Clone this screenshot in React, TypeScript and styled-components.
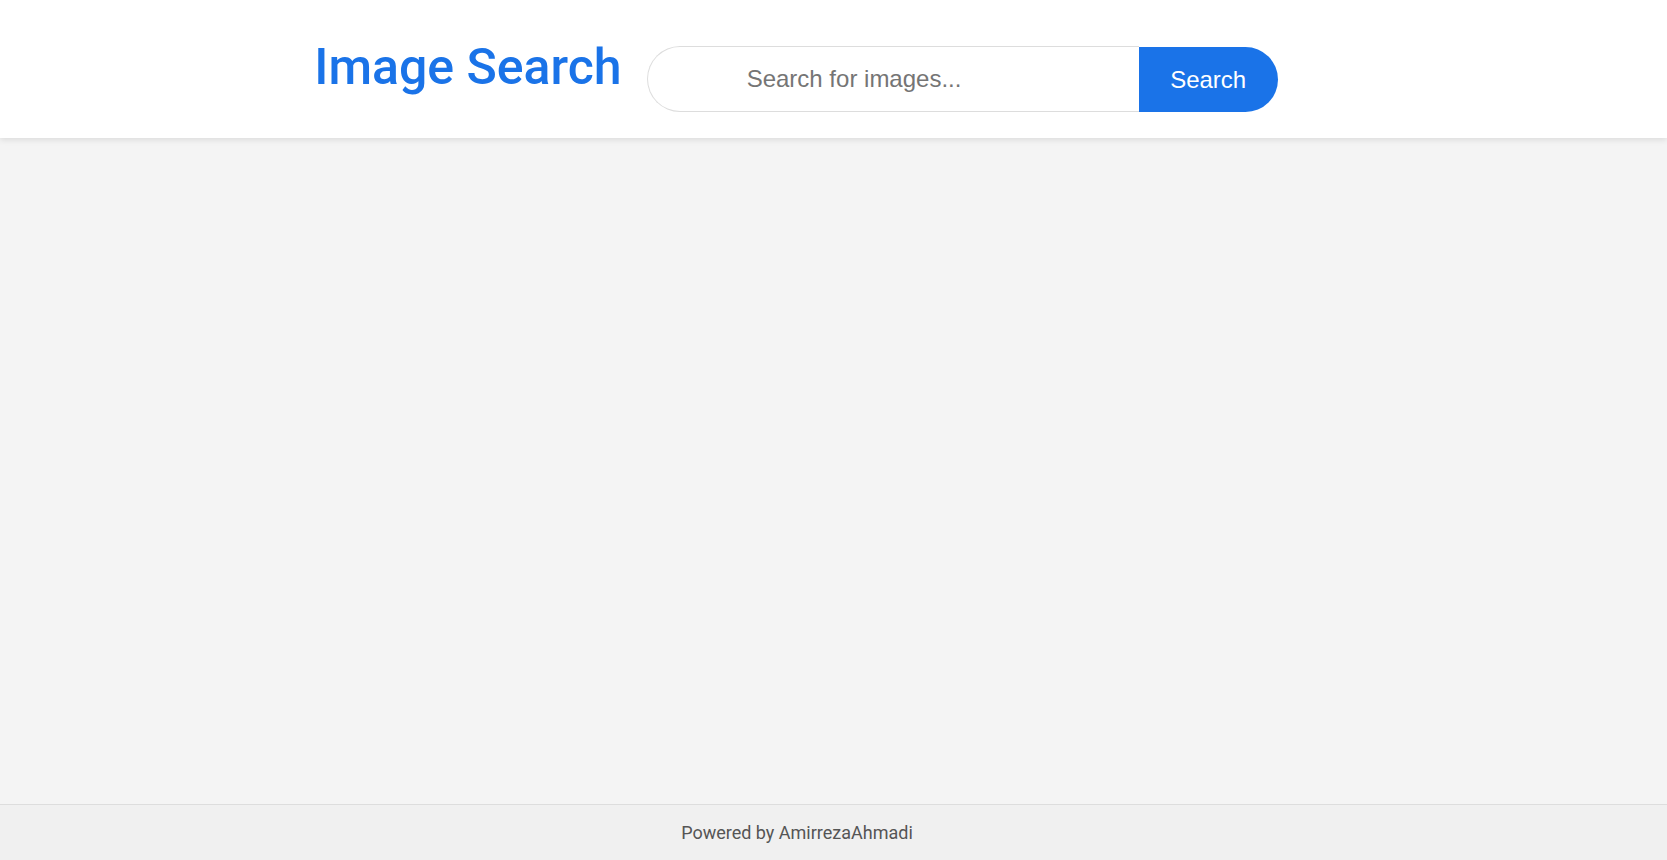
import React, { FC, useState } from "react";
import styled, { createGlobalStyle } from "styled-components";

const GlobalStyle = createGlobalStyle`
  * {
    box-sizing: border-box;
  }
  body {
    margin: 0;
    font-family: Roboto, "Liberation Sans", sans-serif;
    background: #f4f4f4;
  }
`;

const App: FC = () => {
  const [query, setQuery] = useState("");

  return (
    <Page>
      <GlobalStyle />
      <Header>
        <HeaderInner>
          <Title>Image Search</Title>
          <SearchForm onSubmit={(e) => e.preventDefault()}>
            <SearchInput
              type="text"
              placeholder="Search for images..."
              value={query}
              onChange={(e) => setQuery(e.target.value)}
            />
            <SearchButton type="submit">Search</SearchButton>
          </SearchForm>
        </HeaderInner>
      </Header>
      <Main />
      <Footer>
        <FooterText>Powered by AmirrezaAhmadi</FooterText>
      </Footer>
    </Page>
  );
};

const Page = styled.div`
  min-height: 100vh;
  display: flex;
  flex-direction: column;
`;

const Header = styled.header`
  height: 138px;
  background: #fff;
  box-shadow: 0 2px 6px rgba(0, 0, 0, 0.1);
  position: relative;
  z-index: 1;
`;

const HeaderInner = styled.div`
  display: flex;
  justify-content: center;
  align-items: flex-start;
  gap: 25px;
  padding-top: 31px;
  padding-right: 75px;
`;

const Title = styled.h1`
  margin: 6px 0 0;
  font-family: Roboto, sans-serif;
  font-size: 50px;
  font-weight: 500;
  line-height: 60px;
  color: #1a73e8;
`;

const SearchForm = styled.form`
  display: flex;
  margin-top: 15px;
`;

const SearchInput = styled.input`
  width: 492px;
  height: 66px;
  padding: 0 20px 0 99px;
  border: 1px solid #ddd;
  border-right: none;
  border-radius: 33px 0 0 33px;
  font-family: "Liberation Sans", Arial, sans-serif;
  font-size: 24px;
  color: #333;
  outline: none;

  &::placeholder {
    color: #757575;
  }
`;

const SearchButton = styled.button`
  width: 139px;
  height: 65px;
  margin-top: 1px;
  border: none;
  border-radius: 0 33px 33px 0;
  background: #1a73e8;
  color: #fff;
  font-family: "Liberation Sans", Arial, sans-serif;
  font-size: 24px;
  cursor: pointer;
`;

const Main = styled.main`
  flex: 1;
`;

const Footer = styled.footer`
  height: 56px;
  background: #f0f0f0;
  border-top: 1px solid #ddd;
  display: flex;
  align-items: center;
  justify-content: center;
  padding-right: 73px;
`;

const FooterText = styled.p`
  margin: 0;
  font-family: Roboto, sans-serif;
  font-size: 18px;
  color: #555;
`;

export default App;
